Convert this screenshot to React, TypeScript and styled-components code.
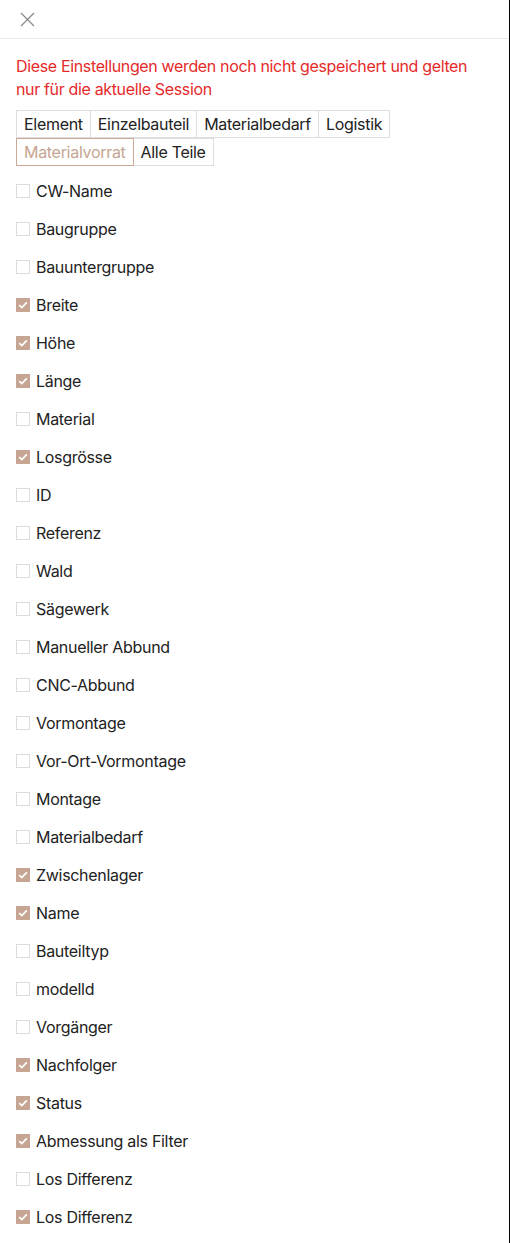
import React, { useState } from "react";
import styled, { createGlobalStyle } from "styled-components";

const Global = createGlobalStyle`
  html, body { margin: 0; padding: 0; background: #fff; }
  body { font-family: Inter, "Noto Sans", "Liberation Sans", sans-serif; color: #222; }
  * { box-sizing: border-box; }
`;

const Panel = styled.div`
  width: 510px;
  min-height: 1243px;
  background: #fff;
  border-right: 1px solid #000;
`;

const Header = styled.div`
  height: 39px;
  border-bottom: 1px solid #ececec;
  display: flex;
  align-items: center;
  padding-left: 19px;
`;

const CloseButton = styled.button`
  border: 0;
  background: none;
  padding: 0;
  width: 16px;
  height: 16px;
  display: flex;
  align-items: center;
  justify-content: center;
  cursor: pointer;
  color: #8a8a8a;
`;

const Content = styled.div`
  padding: 16px 16px 0 16px;
`;

const Notice = styled.p`
  margin: 0;
  color: #e52a2a;
  font-size: 16px;
  line-height: 23px;
  letter-spacing: -0.35px;
`;

const Tabs = styled.div`
  display: flex;
  flex-wrap: wrap;
  width: 380px;
  margin-top: 9px;
  padding-left: 1px;
`;

const Tab = styled.button<{ $active?: boolean }>`
  height: 28px;
  margin-left: -1px;
  padding: 0 7px;
  font-family: inherit;
  font-size: 16px;
  background: #fff;
  border: 1px solid ${(p) => (p.$active ? "#c9aa97" : "#dedede")};
  color: ${(p) => (p.$active ? "#c4a592" : "#222")};
  position: relative;
  z-index: ${(p) => (p.$active ? 1 : 0)};
  cursor: pointer;
  letter-spacing: -0.3px;
`;

const TabBreak = styled.div`
  flex-basis: 100%;
  height: 0;
`;

const List = styled.div`
  margin-top: 6px;
  display: flex;
  flex-direction: column;
`;

const Row = styled.label`
  height: 38px;
  display: flex;
  align-items: center;
  gap: 6px;
  font-size: 16px;
  color: #222;
  cursor: pointer;
  letter-spacing: -0.3px;
`;

const Box = styled.span<{ $checked: boolean }>`
  width: 14px;
  height: 14px;
  flex: none;
  border: 1px solid ${(p) => (p.$checked ? "#c6a692" : "#dcdcdc")};
  background: ${(p) => (p.$checked ? "#c6a692" : "#fff")};
  display: flex;
  align-items: center;
  justify-content: center;
`;

const items: [string, boolean][] = [
  ["CW-Name", false],
  ["Baugruppe", false],
  ["Bauuntergruppe", false],
  ["Breite", true],
  ["Höhe", true],
  ["Länge", true],
  ["Material", false],
  ["Losgrösse", true],
  ["ID", false],
  ["Referenz", false],
  ["Wald", false],
  ["Sägewerk", false],
  ["Manueller Abbund", false],
  ["CNC-Abbund", false],
  ["Vormontage", false],
  ["Vor-Ort-Vormontage", false],
  ["Montage", false],
  ["Materialbedarf", false],
  ["Zwischenlager", true],
  ["Name", true],
  ["Bauteiltyp", false],
  ["modelld", false],
  ["Vorgänger", false],
  ["Nachfolger", true],
  ["Status", true],
  ["Abmessung als Filter", true],
  ["Los Differenz", false],
  ["Los Differenz", true],
];

const tabsRow1 = ["Element", "Einzelbauteil", "Materialbedarf", "Logistik"];
const tabsRow2 = ["Materialvorrat", "Alle Teile"];

export default function App() {
  const [checks, setChecks] = useState(items.map((i) => i[1]));
  const [active, setActive] = useState("Materialvorrat");
  return (
    <>
      <Global />
      <Panel>
        <Header>
          <CloseButton aria-label="close">
            <svg width="15" height="15" viewBox="0 0 15 15">
              <path d="M1 1L14 14M14 1L1 14" stroke="currentColor" strokeWidth="1.3" fill="none" />
            </svg>
          </CloseButton>
        </Header>
        <Content>
          <Notice>
            Diese Einstellungen werden noch nicht gespeichert und gelten nur für die aktuelle Session
          </Notice>
          <Tabs>
            {tabsRow1.map((t) => (
              <Tab key={t} $active={active === t} onClick={() => setActive(t)}>
                {t}
              </Tab>
            ))}
            <TabBreak />
            {tabsRow2.map((t) => (
              <Tab key={t} $active={active === t} onClick={() => setActive(t)}>
                {t}
              </Tab>
            ))}
          </Tabs>
          <List>
            {items.map(([name], i) => (
              <Row
                key={i}
                onClick={() =>
                  setChecks((c) => c.map((v, j) => (j === i ? !v : v)))
                }
              >
                <Box $checked={checks[i]}>
                  {checks[i] && (
                    <svg width="10" height="8" viewBox="0 0 10 8">
                      <path d="M1.2 4.2L3.8 6.6L8.8 1.4" stroke="#fff" strokeWidth="1.8" fill="none" />
                    </svg>
                  )}
                </Box>
                {name}
              </Row>
            ))}
          </List>
        </Content>
      </Panel>
    </>
  );
}
